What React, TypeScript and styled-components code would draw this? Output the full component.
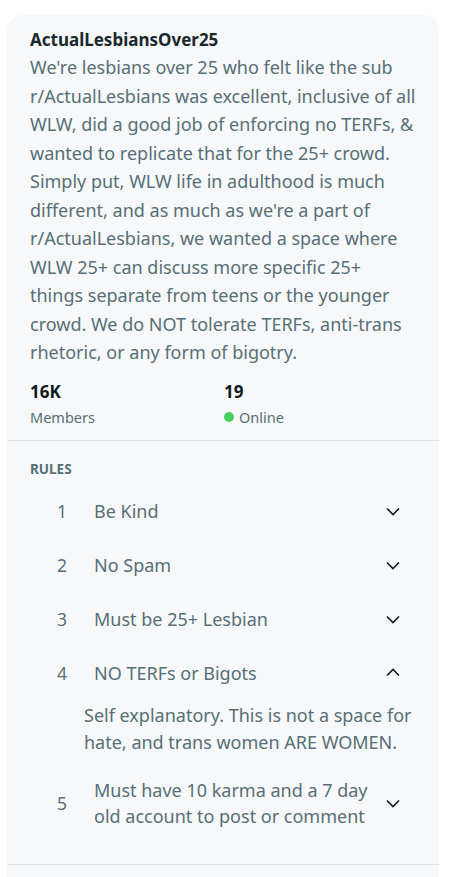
import React, { useState } from 'react';
import styled, { createGlobalStyle } from 'styled-components';

const GlobalStyle = createGlobalStyle`
  body {
    margin: 0;
    background: #ffffff;
    font-family: "Noto Sans", "Open Sans", sans-serif;
  }
`;

const Card = styled.aside`
  margin: 15px 17px 0 7px;
  background: #f6f8f9;
  border-radius: 16px 16px 0 0;
  min-height: 880px;
`;

const About = styled.section`
  padding: 12px 22px 10px 23px;
`;

const Name = styled.h2`
  margin: 0;
  font-size: 17px;
  line-height: 26px;
  font-weight: 700;
  color: #1a282d;
`;

const Description = styled.p`
  margin: 0;
  font-size: 18px;
  line-height: 28.5px;
  color: #576f76;
`;

const Stats = styled.div`
  display: grid;
  grid-template-columns: 194px 1fr;
  margin-top: 13px;
`;

const Stat = styled.div`
  display: flex;
  flex-direction: column;
`;

const StatValue = styled.span`
  font-size: 17px;
  line-height: 24px;
  font-weight: 700;
  color: #0f1a1c;
`;

const StatLabel = styled.span`
  display: flex;
  align-items: center;
  gap: 5px;
  font-size: 14.5px;
  line-height: 26px;
  color: #576f76;
`;

const Dot = styled.span`
  width: 10px;
  height: 10px;
  border-radius: 50%;
  background: #46d160;
`;

const Divider = styled.hr`
  margin: 0;
  border: 0;
  border-top: 1px solid #dfe3e5;
`;

const Rules = styled.section`
  padding: 18px 0 34px 23px;
`;

const Heading = styled.h3`
  margin: 0 0 5px;
  font-size: 13.5px;
  line-height: 20px;
  font-weight: 700;
  color: #576f76;
  text-transform: uppercase;
`;

const RuleList = styled.ol`
  list-style: none;
  margin: 0;
  padding: 0;
`;

const RuleRow = styled.li`
  display: flex;
  align-items: center;
  min-height: 54px;
  padding-right: 38px;
  cursor: pointer;
`;

const Num = styled.span`
  width: 64px;
  padding-left: 27px;
  box-sizing: border-box;
  font-size: 17.5px;
  color: #576f76;
`;

const RuleTitle = styled.span`
  flex: 1;
  font-size: 18px;
  line-height: 26px;
  color: #576f76;
  padding-right: 8px;
`;

const RuleBody = styled.div`
  padding: 2px 18px 20px 54px;
  font-size: 18px;
  line-height: 27px;
  color: #576f76;
`;

const Chevron = ({ up }: { up?: boolean }) => (
  <svg width="16" height="16" viewBox="0 0 16 16" fill="none">
    <path
      d={up ? 'M2 10.5 L8 4.5 L14 10.5' : 'M2 5.5 L8 11.5 L14 5.5'}
      stroke="#0f1a1c"
      strokeWidth="1.6"
    />
  </svg>
);

const rules = [
  { title: 'Be Kind' },
  { title: 'No Spam' },
  { title: 'Must be 25+ Lesbian' },
  {
    title: 'NO TERFs or Bigots',
    body: 'Self explanatory. This is not a space for hate, and trans women ARE WOMEN.',
  },
  { title: 'Must have 10 karma and a 7 day old account to post or comment' },
];

export default function App() {
  const [open, setOpen] = useState<number | null>(3);

  return (
    <>
      <GlobalStyle />
      <Card>
        <About>
          <Name>ActualLesbiansOver25</Name>
          <Description>
            We're lesbians over 25 who felt like the sub r/ActualLesbians was excellent, inclusive of
            all WLW, did a good job of enforcing no TERFs, &amp; wanted to replicate that for the 25+
            crowd. Simply put, WLW life in adulthood is much different, and as much as we're a part
            of r/ActualLesbians, we wanted a space where WLW 25+ can discuss more specific 25+ things
            separate from teens or the younger crowd. We do NOT tolerate TERFs, anti-trans rhetoric,
            or any form of bigotry.
          </Description>
          <Stats>
            <Stat>
              <StatValue>16K</StatValue>
              <StatLabel>Members</StatLabel>
            </Stat>
            <Stat>
              <StatValue>19</StatValue>
              <StatLabel>
                <Dot />
                Online
              </StatLabel>
            </Stat>
          </Stats>
        </About>
        <Divider />
        <Rules>
          <Heading>Rules</Heading>
          <RuleList>
            {rules.map((r, i) => (
              <React.Fragment key={i}>
                <RuleRow onClick={() => setOpen(open === i ? null : i)}>
                  <Num>{i + 1}</Num>
                  <RuleTitle>{r.title}</RuleTitle>
                  <Chevron up={open === i} />
                </RuleRow>
                {open === i && r.body && <RuleBody>{r.body}</RuleBody>}
              </React.Fragment>
            ))}
          </RuleList>
        </Rules>
        <Divider />
      </Card>
    </>
  );
}
